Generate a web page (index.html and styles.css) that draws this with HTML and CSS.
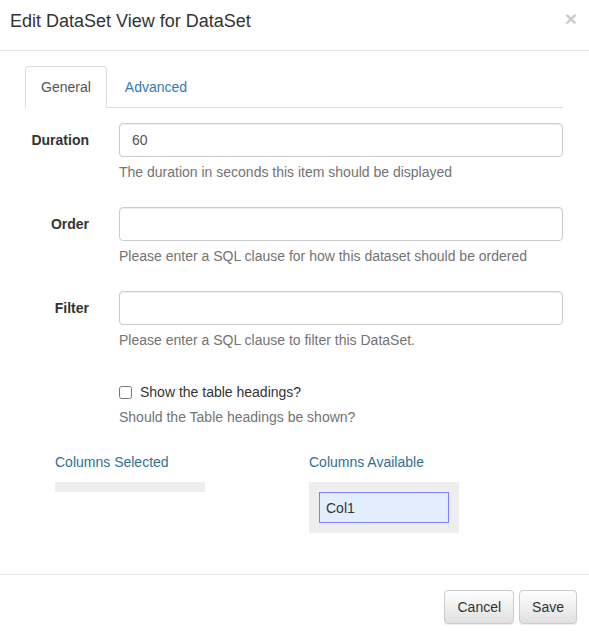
FILE: index.html
```html
<!DOCTYPE html>
<html>
<head>
<meta charset="utf-8">
<link rel="stylesheet" href="styles.css">
</head>
<body>
<div class="modal">
  <div class="modal-header">
    <h4 class="modal-title">Edit DataSet View for DataSet</h4>
    <button class="close" type="button">×</button>
  </div>
  <div class="modal-body">
    <ul class="nav-tabs">
      <li class="active"><a>General</a></li>
      <li><a>Advanced</a></li>
    </ul>
    <div class="tab-content">
      <div class="form-group">
        <label class="control-label">Duration</label>
        <div class="control">
          <input class="form-control" type="text" value="60">
          <span class="help-block">The duration in seconds this item should be displayed</span>
        </div>
      </div>
      <div class="form-group">
        <label class="control-label">Order</label>
        <div class="control">
          <input class="form-control" type="text" value="">
          <span class="help-block">Please enter a SQL clause for how this dataset should be ordered</span>
        </div>
      </div>
      <div class="form-group">
        <label class="control-label">Filter</label>
        <div class="control">
          <input class="form-control" type="text" value="">
          <span class="help-block">Please enter a SQL clause to filter this DataSet.</span>
        </div>
      </div>
      <div class="form-group">
        <div class="control offset">
          <div class="checkbox">
            <label><input type="checkbox">Show the table headings?</label>
          </div>
          <span class="help-block">Should the Table headings be shown?</span>
        </div>
      </div>
      <div class="columns">
        <div class="col col-selected">
          <div class="col-title">Columns Selected</div>
          <ul class="col-list"></ul>
        </div>
        <div class="col">
          <div class="col-title">Columns Available</div>
          <ul class="col-list available">
            <li class="col-item">Col1</li>
          </ul>
        </div>
      </div>
    </div>
  </div>
  <div class="modal-footer">
    <button class="btn" type="button">Cancel</button>
    <button class="btn" type="button">Save</button>
  </div>
</div>
</body>
</html>
```

FILE: styles.css
```css
* {
  box-sizing: border-box;
}
html, body {
  margin: 0;
  padding: 0;
  background: #fff;
}
body {
  font-family: "Liberation Sans", Arial, Helvetica, sans-serif;
  font-size: 14px;
  line-height: 20px;
  color: #333;
}
.modal {
  width: 589px;
  background: #fff;
}
.modal-header {
  display: flex;
  justify-content: space-between;
  align-items: flex-start;
  padding: 6px 12px 14px 10px;
  border-bottom: 1px solid #e5e5e5;
}
.modal-title {
  margin: 0;
  font-size: 18px;
  font-weight: normal;
  line-height: 30px;
  color: #333;
}
.close {
  border: 0;
  background: transparent;
  padding: 0;
  margin-top: 2px;
  font-family: "Liberation Sans", Arial, sans-serif;
  font-size: 21px;
  font-weight: bold;
  line-height: 21px;
  color: #000;
  opacity: 0.2;
}
.modal-body {
  padding: 15px 26px 41px 25px;
}
.nav-tabs {
  display: flex;
  list-style: none;
  margin: 0 0 15px 0;
  padding: 0;
  border-bottom: 1px solid #ddd;
}
.nav-tabs li {
  margin-bottom: -1px;
  margin-right: 2px;
}
.nav-tabs a {
  display: block;
  padding: 10px 15px;
  line-height: 20px;
  border: 1px solid transparent;
  border-radius: 4px 4px 0 0;
  color: #337ab7;
}
.nav-tabs li.active a {
  color: #555;
  background: #fff;
  border-color: #ddd #ddd transparent #ddd;
}
.form-group {
  display: flex;
  margin-bottom: 15px;
}
.control-label {
  width: 64px;
  flex: none;
  text-align: right;
  padding-top: 7px;
  font-weight: bold;
}
.control {
  flex: 1;
  margin-left: 30px;
}
.control.offset {
  margin-left: 94px;
}
.form-control {
  display: block;
  width: 100%;
  height: 34px;
  padding: 6px 12px;
  font-family: inherit;
  font-size: 14px;
  line-height: 20px;
  color: #555;
  background: #fff;
  border: 1px solid #ccc;
  border-radius: 4px;
  box-shadow: inset 0 1px 1px rgba(0, 0, 0, 0.075);
  margin: 0;
}
.help-block {
  display: block;
  margin-top: 5px;
  margin-bottom: 10px;
  color: #737373;
}
.checkbox {
  padding-top: 7px;
  min-height: 27px;
}
.checkbox label {
  display: flex;
  align-items: center;
  font-weight: normal;
}
.checkbox input {
  width: 13px;
  height: 13px;
  margin: 0 8px 0 0;
}
.columns {
  display: grid;
  grid-template-columns: 284px 1fr;
}
.col-selected {
  padding-left: 30px;
}
.col-title {
  color: #31708f;
  margin-bottom: 10px;
}
.col-list {
  list-style: none;
  margin: 0;
  padding: 0;
  width: 150px;
  min-height: 10px;
  background: #eee;
}
.col-list.available {
  padding: 10px;
}
.col-item {
  height: 31px;
  padding: 5px 6px;
  background: #e3eefd;
  border: 1px solid #8080ff;
  color: #333;
}
.modal-footer {
  display: flex;
  justify-content: flex-end;
  gap: 5px;
  padding: 15px 12px 15px 15px;
  border-top: 1px solid #e5e5e5;
}
.btn {
  height: 34px;
  padding: 6px 12px;
  font-family: inherit;
  font-size: 14px;
  line-height: 20px;
  color: #333;
  background: linear-gradient(to bottom, #fff 0%, #e0e0e0 100%);
  border: 1px solid #ccc;
  border-radius: 4px;
  box-shadow: inset 0 1px 0 rgba(255, 255, 255, 0.15), 0 1px 1px rgba(0, 0, 0, 0.075);
}
```
